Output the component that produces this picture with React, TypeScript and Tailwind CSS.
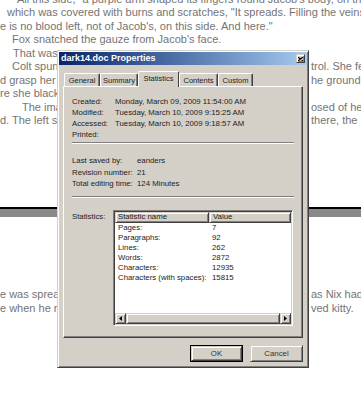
const topLines = [
  { pad: 'pl-[13px]', left: '"All this side," a purple arm shaped its fingers round Jacob\'s body, on the right', right: null },
  { pad: 'pl-[7px]', left: 'which was covered with burns and scratches, "It spreads. Filling the veins', right: null },
  { pad: 'pl-0', left: 'e is no blood left, not of Jacob\'s, on this side. And here."', right: null },
  { pad: 'pl-[12px]', left: 'Fox snatched the gauze from Jacob\'s face.', right: null },
  { pad: 'pl-[13px]', left: 'That was the last of it.', right: '' },
  { pad: 'pl-[12px]', left: 'Colt spun around', right: 'trol. She felt' },
  { pad: 'pl-0', left: 'd grasp her side', right: 'he ground' },
  { pad: 'pl-0', left: 're she blacked out.', right: '' },
  { pad: 'pl-[22px]', left: 'The image', right: 'osed of her' },
  { pad: 'pl-0', left: 'd. The left side', right: 'there, the' },
]

const bottomLines = [
  { pad: 'pl-0', left: 'e was spreading', right: 'as Nix had' },
  { pad: 'pl-0', left: 'e when he needed', right: 'ved kitty.' },
]

const dates = [
  ['Created:', 'Monday, March 09, 2009 11:54:00 AM'],
  ['Modified:', 'Tuesday, March 10, 2009 9:15:25 AM'],
  ['Accessed:', 'Tuesday, March 10, 2009 9:18:57 AM'],
  ['Printed:', ''],
]

const saved = [
  ['Last saved by:', 'eanders'],
  ['Revision number:', '21'],
  ['Total editing time:', '124 Minutes'],
]

const stats = [
  ['Pages:', '7'],
  ['Paragraphs:', '92'],
  ['Lines:', '262'],
  ['Words:', '2872'],
  ['Characters:', '12935'],
  ['Characters (with spaces):', '15815'],
]

const tabs = [
  { label: 'General', w: 'w-[36px]', active: false },
  { label: 'Summary', w: 'w-[38px]', active: false },
  { label: 'Statistics', w: 'w-[41px]', active: true },
  { label: 'Contents', w: 'w-[39px]', active: false },
  { label: 'Custom', w: 'w-[35px]', active: false },
]

type Line = { pad: string; left: string; right: string | null }

// the dialog hides the middle of each line, so only the visible ends are laid out
function DocLine({ line }: { line: Line }) {
  if (line.right === null) {
    return <div className={`h-[13.5px] leading-[13.5px] whitespace-nowrap ${line.pad}`}>{line.left}</div>
  }
  return (
    <div className="flex h-[13.5px] leading-[13.5px] whitespace-nowrap">
      <span className={`w-[57px] shrink-0 overflow-hidden ${line.pad}`}>{line.left}</span>
      <span className="ml-[254px]">{line.right}</span>
    </div>
  )
}

function Arrow({ dir }: { dir: 'left' | 'right' }) {
  return (
    <svg width="3" height="5" viewBox="0 0 3 5">
      {dir === 'left' ? <path d="M3 0 L0 2.5 L3 5 Z" fill="#000" /> : <path d="M0 0 L3 2.5 L0 5 Z" fill="#000" />}
    </svg>
  )
}

function Raised({ className = '', children }: { className?: string; children?: React.ReactNode }) {
  return (
    <div
      className={`border border-[#d4d0c8] border-r-[#404040] border-b-[#404040] bg-[#d4d0c8] shadow-[inset_1px_1px_0_#fff,inset_-1px_-1px_0_#808080] ${className}`}
    >
      {children}
    </div>
  )
}

function PropertiesDialog() {
  return (
    <div className="absolute left-[57px] top-[50px] flex h-[318px] w-[252px] flex-col border border-[#d4d0c8] border-r-[#404040] border-b-[#404040] bg-[#d4d0c8] p-px font-['Liberation_Sans',Arial,sans-serif] text-[7.8px] text-[#222] shadow-[inset_1px_1px_0_#fff,inset_-1px_-1px_0_#808080]">
      {/* title bar */}
      <div className="flex h-[13px] items-center justify-between bg-linear-to-r from-[#0a246a] to-[#a6caf0] px-[2px]">
        <span className="text-[9px] leading-none font-bold text-white">dark14.doc Properties</span>
        <Raised className="flex h-[9px] w-[9px] items-center justify-center">
          <svg width="5" height="4" viewBox="0 0 5 4">
            <path d="M0 0 L5 4 M5 0 L0 4" stroke="#000" strokeWidth="1.1" />
          </svg>
        </Raised>
      </div>

      <div className="flex flex-1 flex-col px-[4px] pb-[4px]">
        {/* tabs */}
        <div className="mt-[6px] flex items-end pl-px text-[7.5px]">
          {tabs.map((t) =>
            t.active ? (
              <div
                key={t.label}
                className={`relative z-10 -mb-px flex h-[16px] items-start justify-center rounded-t-[2px] border-t border-l border-r border-t-white border-l-white border-r-[#404040] bg-[#d4d0c8] pt-[2px] leading-[9px] ${t.w}`}
              >
                {t.label}
              </div>
            ) : (
              <div
                key={t.label}
                className={`flex h-[13px] items-center justify-center rounded-t-[2px] border-t border-l border-r border-t-white border-l-white border-r-[#404040] leading-[9px] shadow-[inset_-1px_0_0_#808080] ${t.w}`}
              >
                {t.label}
              </div>
            ),
          )}
        </div>

        {/* panel */}
        <div className="flex h-[252px] flex-col border border-t-white border-l-white border-r-[#404040] border-b-[#404040] px-[8px] pt-[8.5px] shadow-[inset_-1px_-1px_0_#808080]">
          {dates.map(([k, v]) => (
            <div key={k} className="flex h-[11px] items-center leading-[11px]">
              <span className="w-[43px] shrink-0">{k}</span>
              <span className="whitespace-nowrap">{v}</span>
            </div>
          ))}
          <div className="mt-[2.5px] border-t border-b border-t-[#808080] border-b-white" />

          <div className="mt-[11px]">
            {saved.map(([k, v]) => (
              <div key={k} className="flex h-[11.5px] items-center leading-[11.5px]">
                <span className="w-[65px] shrink-0">{k}</span>
                <span>{v}</span>
              </div>
            ))}
          </div>
          <div className="mt-[6px] border-t border-b border-t-[#808080] border-b-white" />

          <div className="mt-[12px] flex">
            <span className="w-[41px] shrink-0 pt-[1px] leading-[11px]">Statistics:</span>
            <div className="flex h-[116px] w-[180px] flex-col border border-[#808080] border-r-white border-b-white bg-white p-px shadow-[inset_1px_1px_0_#404040,inset_-1px_-1px_0_#d4d0c8]">
              <div className="flex h-[11px]">
                <Raised className="flex w-[94px] items-center pl-[2px] leading-none">Statistic name</Raised>
                <Raised className="flex flex-1 items-center pl-[3px] leading-none">Value</Raised>
              </div>
              <div className="flex-1">
                {stats.map(([k, v]) => (
                  <div key={k} className="flex h-[10px] items-center leading-[10px]">
                    <span className="w-[94px] shrink-0 pl-[3px] whitespace-nowrap">{k}</span>
                    <span className="pl-[3px]">{v}</span>
                  </div>
                ))}
              </div>
              <div className="flex h-[11px] bg-[#ece9e2]">
                <Raised className="flex w-[11px] items-center justify-center">
                  <Arrow dir="left" />
                </Raised>
                <Raised className="flex-1" />
                <Raised className="flex w-[11px] items-center justify-center">
                  <Arrow dir="right" />
                </Raised>
              </div>
            </div>
          </div>
        </div>

        {/* buttons */}
        <div className="mt-[7px] flex justify-end gap-[7px]">
          <div className="border border-black">
            <Raised className="flex h-[15px] w-[51px] items-center justify-center text-[#333]">OK</Raised>
          </div>
          <Raised className="flex h-[17px] w-[53px] items-center justify-center text-[#333]">Cancel</Raised>
        </div>
      </div>
    </div>
  )
}

export default function App() {
  return (
    <div className="relative h-[400px] w-[361px] overflow-hidden bg-white font-['Liberation_Sans',Arial,sans-serif] text-[11px] text-[#747474]">
      <div className="-mt-[7.25px]">
        {topLines.map((l, i) => (
          <DocLine key={i} line={l} />
        ))}
      </div>

      {/* page break between pages */}
      <div className="mt-[79.25px] h-[10px] border-t-2 border-black bg-[#8a8a8a]" />

      <div className="mt-[71.25px]">
        {bottomLines.map((l, i) => (
          <DocLine key={i} line={l} />
        ))}
      </div>

      <PropertiesDialog />
    </div>
  )
}
